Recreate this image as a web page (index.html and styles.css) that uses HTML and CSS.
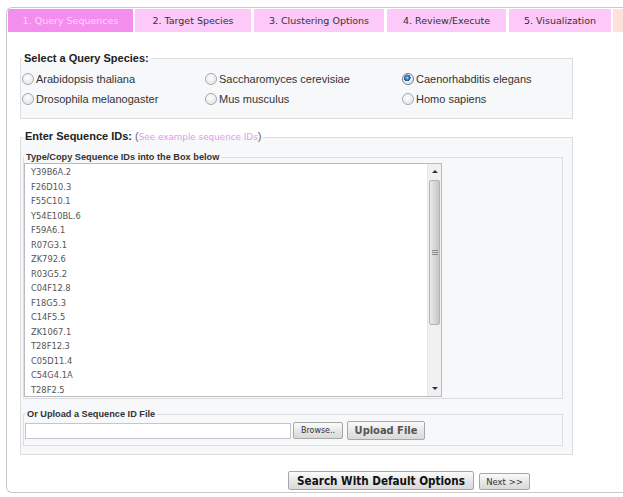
FILE: index.html
```html
<!DOCTYPE html>
<html>
<head>
<meta charset="utf-8">
<link rel="stylesheet" href="styles.css">
</head>
<body>
<div class="wrap">
  <div class="tabs">
    <div class="tab tab-active tab-1">1. Query Sequences</div>
    <div class="tab tab-2">2. Target Species</div>
    <div class="tab tab-3">3. Clustering Options</div>
    <div class="tab tab-4">4. Review/Execute</div>
    <div class="tab tab-5">5. Visualization</div>
    <div class="tab tab-next"></div>
  </div>

  <fieldset class="box species">
    <legend class="box-title">Select a Query Species:</legend>
    <div class="species-grid">
      <label class="opt"><span class="radio"></span>Arabidopsis thaliana</label>
      <label class="opt"><span class="radio"></span>Saccharomyces cerevisiae</label>
      <label class="opt"><span class="radio radio-on"></span>Caenorhabditis elegans</label>
      <label class="opt"><span class="radio"></span>Drosophila melanogaster</label>
      <label class="opt"><span class="radio"></span>Mus musculus</label>
      <label class="opt"><span class="radio"></span>Homo sapiens</label>
    </div>
  </fieldset>

  <fieldset class="box seq">
    <legend class="box-title">Enter Sequence IDs: <span class="paren">(<span class="example">See example sequence IDs</span>)</span></legend>
    <fieldset class="sub ids">
      <legend class="sub-title">Type/Copy Sequence IDs into the Box below</legend>
      <div class="ta">
        <div class="ta-text">
          <div>Y39B6A.2</div>
          <div>F26D10.3</div>
          <div>F55C10.1</div>
          <div>Y54E10BL.6</div>
          <div>F59A6.1</div>
          <div>R07G3.1</div>
          <div>ZK792.6</div>
          <div>R03G5.2</div>
          <div>C04F12.8</div>
          <div>F18G5.3</div>
          <div>C14F5.5</div>
          <div>ZK1067.1</div>
          <div>T28F12.3</div>
          <div>C05D11.4</div>
          <div>C54G4.1A</div>
          <div>T28F2.5</div>
        </div>
        <div class="sb">
          <div class="sb-btn"><span class="arr-up"></span></div>
          <div class="sb-track">
            <div class="sb-thumb"><span class="grip"></span></div>
          </div>
          <div class="sb-btn"><span class="arr-down"></span></div>
        </div>
      </div>
    </fieldset>
    <fieldset class="sub upload">
      <legend class="sub-title">Or Upload a Sequence ID File</legend>
      <div class="upload-row">
        <span class="file-input"></span>
        <button class="btn btn-browse">Browse..</button>
        <button class="btn btn-upload">Upload File</button>
      </div>
    </fieldset>
  </fieldset>

  <div class="actions">
    <button class="btn btn-search">Search With Default Options</button>
    <button class="btn btn-next">Next &gt;&gt;</button>
  </div>
</div>
</body>
</html>
```
FILE: styles.css
```css
* { box-sizing: border-box; }
html, body {
  margin: 0;
  padding: 0;
  background: #fff;
  overflow: hidden;
}
body {
  font-family: "Liberation Sans", Arial, sans-serif;
  color: #222;
}

.wrap {
  margin: 7px 0 0 6px;
  width: 617px;
  height: 486px;
  border: 1px solid #c9c9c9;
  border-right: none;
  border-radius: 6px 0 0 6px;
  padding: 1px 0 1px 1px;
}

/* tabs */
.tabs {
  display: flex;
  height: 23px;
}
.tab {
  height: 23px;
  line-height: 24px;
  text-align: center;
  font-family: "DejaVu Sans", Verdana, sans-serif;
  font-size: 9.5px;
  color: #333;
  background: #fdc9f8;
  margin-right: 3px;
  white-space: nowrap;
  flex: none;
}
.tab-active {
  background: #f48eee;
  color: #fcd6f9;
  border-top-left-radius: 2px;
}
.tab-1 { width: 125px; margin-right: 2px; }
.tab-2 { width: 116px; }
.tab-3 { width: 130px; }
.tab-4 { width: 119px; }
.tab-5 { width: 102px; margin-right: 2px; }
.tab-next { flex: 1; background: #fde2dc; margin-right: 0; }

/* fieldsets */
.box {
  margin: 0 0 0 12px;
  width: 553px;
  border: 1px solid #dcdde0;
  background: #f7f8fa;
  min-width: 0;
}
.box-title {
  font-size: 11px;
  font-weight: bold;
  line-height: 13px;
  padding: 0 2px;
  color: #222;
}
.species {
  margin-top: 20px;
  padding: 4px 0 9px 1px;
}
.species-grid {
  display: grid;
  grid-template-columns: 183px 197px 1fr;
  grid-auto-rows: 20px;
}
.opt {
  display: flex;
  align-items: center;
  font-size: 11px;
  color: #333;
  white-space: nowrap;
}
.radio {
  width: 12px;
  height: 12px;
  border-radius: 50%;
  border: 1px solid #a4a8ac;
  background: radial-gradient(circle at 45% 40%, #ffffff 0, #f2f3f4 35%, #d3d6da 100%);
  margin-right: 2px;
  flex: none;
  box-shadow: inset 0 0 0 1px rgba(255,255,255,0.5);
}
.radio-on {
  border-color: #6f7c8a;
  background:
    radial-gradient(circle at 42% 38%, #bfe3ff 0, #3f8ed6 1.5px, #1c4f8c 3.2px, rgba(0,0,0,0) 3.6px),
    radial-gradient(circle at 45% 40%, #ffffff 0, #eef0f2 40%, #cfd3d8 100%);
}

.seq {
  margin-top: 11px;
  padding: 0 9px 8px 2px;
}
.paren {
  font-weight: normal;
  color: #666;
  font-size: 11px;
}
.example {
  font-family: "DejaVu Sans", Verdana, sans-serif;
  font-size: 8.8px;
  color: #e39de9;
}

.sub {
  margin: 0;
  width: 540px;
  border: 1px solid #dcdde0;
  background: #f7f8fa;
  min-width: 0;
}
.sub-title {
  font-size: 9.2px;
  font-weight: bold;
  line-height: 11px;
  padding: 0 2px;
  color: #333;
}
.ids {
  margin-top: 8px;
  padding: 0 0 1px 0;
}

/* fake textarea */
.ta {
  display: flex;
  width: 418px;
  height: 234px;
  border: 1px solid #b9bcc0;
  background: #fff;
  overflow: hidden;
}
.ta-text {
  flex: 1;
  padding: 1px 0 0 6px;
  font-family: "DejaVu Sans", Verdana, sans-serif;
  font-size: 8.3px;
  line-height: 14.53px;
  color: #555;
  white-space: nowrap;
}
.sb {
  width: 14px;
  display: flex;
  flex-direction: column;
  background: #f0f0f0;
  border-left: 1px solid #e6e6e6;
}
.sb-btn {
  height: 15px;
  display: flex;
  align-items: center;
  justify-content: center;
}
.arr-up, .arr-down {
  width: 0;
  height: 0;
  border-left: 3px solid transparent;
  border-right: 3px solid transparent;
}
.arr-up { border-bottom: 3px solid #333; }
.arr-down { border-top: 3px solid #333; }
.sb-track {
  flex: 1;
  padding-top: 1px;
}
.sb-thumb {
  height: 145px;
  margin: 0 1px;
  border: 1px solid #b4b4b4;
  border-radius: 2px;
  background: linear-gradient(to right, #eaeaea, #d4d4d4 60%, #c6c6c6);
  display: flex;
  align-items: center;
  justify-content: center;
}
.grip {
  width: 6px;
  height: 5px;
  background: repeating-linear-gradient(to bottom, #8a8a8a 0, #8a8a8a 1px, transparent 1px, transparent 2px);
}

.upload {
  margin-top: 10px;
  padding: 1px 0 5px 1px;
}
.upload-row {
  display: flex;
  align-items: center;
  height: 19px;
}
.file-input {
  width: 266px;
  height: 16px;
  border: 1px solid #c4c6c9;
  background: #fff;
}

.btn {
  margin: 0;
  padding: 0;
  border: 1px solid #a7a7a7;
  border-radius: 2px;
  background: linear-gradient(#fbfbfb, #e6e6e6 55%, #d9d9d9);
  color: #333;
  white-space: nowrap;
  font-family: "DejaVu Sans", Verdana, sans-serif;
}
.btn-browse {
  margin-left: 2px;
  width: 50px;
  height: 17px;
  font-size: 8px;
}
.btn-upload {
  margin-left: 4px;
  width: 78px;
  height: 19px;
  font-size: 11px;
  font-weight: bold;
  color: #555;
  font-stretch: condensed;
}

.actions {
  display: flex;
  align-items: flex-end;
  margin-top: 16px;
  padding-left: 280px;
}
.btn-search {
  width: 186px;
  height: 19px;
  font-size: 11.6px;
  font-weight: bold;
  color: #111;
  font-stretch: condensed;
}
.btn-next {
  margin-left: 5px;
  width: 51px;
  height: 17px;
  font-size: 8.5px;
}
```
